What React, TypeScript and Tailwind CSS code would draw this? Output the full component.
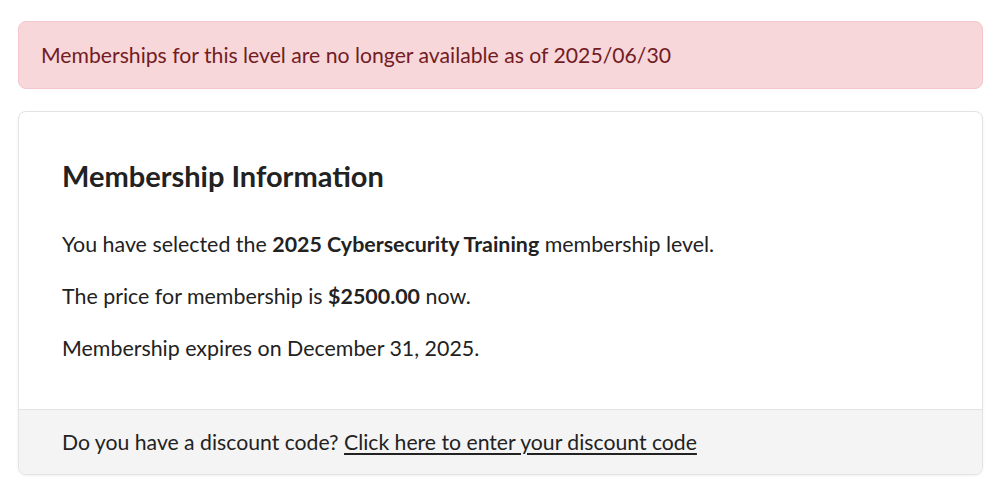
const font = { fontFamily: "Lato, 'Noto Sans', sans-serif" };

const Alert = ({ children }: { children: React.ReactNode }) => (
  <div className="rounded-[8px] border border-[#f5c6cb] bg-[#f8d7da] px-[22px] py-[18px] text-[21.2px] leading-[30px] text-[#721c24]">
    {children}
  </div>
);

export default function App() {
  return (
    <div className="min-h-screen bg-white pl-[18px] pr-[17px] pt-[21px] pb-[19px]" style={font}>
      <Alert>Memberships for this level are no longer available as of 2025/06/30</Alert>

      <div className="mt-[22px] overflow-hidden rounded-[8px] border border-[#e3e3e3] bg-white shadow-[0_1px_3px_rgba(0,0,0,0.06)]">
        <div className="px-[43px] pt-[43px] pb-[24px] text-[#222]">
          <h2 className="text-[29px] font-bold leading-[42px]">Membership Information</h2>
          <p className="mt-[32px] text-[21.4px] leading-[30px]">
            You have selected the <strong>2025 Cybersecurity Training</strong> membership level.
          </p>
          <p className="mt-[22px] text-[21.4px] leading-[30px]">
            The price for membership is <strong>$2500.00</strong> now.
          </p>
          <p className="mt-[22px] mb-[22px] text-[21.4px] leading-[30px]">
            Membership expires on December 31, 2025.
          </p>
        </div>
        <div className="border-t border-[#e3e3e3] bg-[#f4f4f4] px-[43px] py-[17px] text-[21.2px] leading-[30px] text-[#222]">
          Do you have a discount code?{" "}
          <a href="#" className="underline underline-offset-[3px]">
            Click here to enter your discount code
          </a>
        </div>
      </div>
    </div>
  );
}
